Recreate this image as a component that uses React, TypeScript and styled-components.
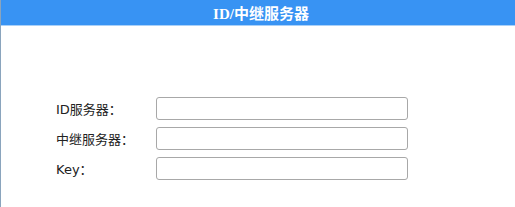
import React from "react";
import styled, { createGlobalStyle } from "styled-components";

const Global = createGlobalStyle`
  html, body { margin: 0; padding: 0; background: #ffffff; }
  * { box-sizing: border-box; }
`;

const Panel = styled.div`
  width: 515px;
  height: 207px;
  border-left: 1px solid #8aa4bd;
  background: #ffffff;
  display: flex;
  flex-direction: column;
`;

const Header = styled.div`
  height: 26px;
  background: #3893f3;
  border-bottom: 1px solid #a9d0f8;
  color: #ffffff;
  font-family: "Liberation Serif", "Noto Sans CJK SC", serif;
  font-weight: bold;
  font-size: 15px;
  display: flex;
  align-items: center;
  justify-content: center;
  padding-left: 6px;
`;

const Form = styled.div`
  display: grid;
  grid-template-columns: 100px 252px;
  row-gap: 7px;
  align-items: center;
  padding: 71px 0 0 55px;
`;

const Label = styled.label`
  font-family: "DejaVu Sans", "Noto Sans CJK SC", sans-serif;
  font-size: 13px;
  color: #222222;
`;

const Input = styled.input`
  height: 23px;
  width: 252px;
  border: 1px solid #a8a8a8;
  border-radius: 3px;
  background: #ffffff;
  padding: 0 4px;
  outline: none;
`;

const fields = ["ID服务器：", "中继服务器：", "Key："];

export default function App() {
  return (
    <>
      <Global />
      <Panel>
        <Header>ID/中继服务器</Header>
        <Form>
          {fields.map((f) => (
            <React.Fragment key={f}>
              <Label>{f}</Label>
              <Input type="text" />
            </React.Fragment>
          ))}
        </Form>
      </Panel>
    </>
  );
}
